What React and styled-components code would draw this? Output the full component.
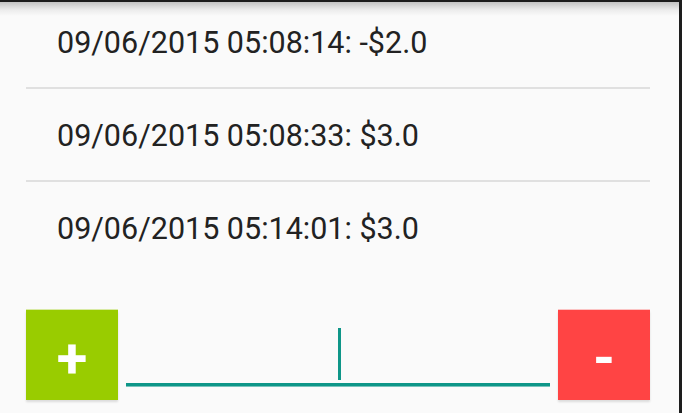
import React from "react";
import styled, { createGlobalStyle } from "styled-components";

const GlobalStyle = createGlobalStyle`
  html, body { margin: 0; padding: 0; background: #fafafa; }
  * { box-sizing: border-box; }
`;

const Screen = styled.div`
  position: relative;
  width: 682px;
  height: 413px;
  overflow: hidden;
  background: #fafafa;
  border-top: 2px solid #1d1d1d;
  border-right: 3px solid #1d1d1d;
  display: flex;
  flex-direction: column;
  font-family: Roboto, "Liberation Sans", sans-serif;
`;

const BarShadow = styled.div`
  position: absolute;
  top: 0;
  left: 0;
  right: 0;
  height: 14px;
  background: linear-gradient(to bottom, rgba(0,0,0,0.22), rgba(0,0,0,0.06) 55%, rgba(0,0,0,0));
  pointer-events: none;
`;

const List = styled.ul`
  list-style: none;
  margin: -6px 29px 0 26px;
  padding: 0;
`;

const Row = styled.li`
  padding: 29px 0 27px 31px;
  font-size: 30.5px;
  line-height: 35px;
  color: #222222;
  white-space: nowrap;
  border-bottom: 2px solid #e0e0e0;
  &:last-child { border-bottom: none; }
`;

const Controls = styled.div`
  margin-top: auto;
  display: flex;
  align-items: flex-start;
  gap: 8px;
  padding: 0 29px 13px 26px;
`;

const ActionButton = styled.button`
  width: 92px;
  height: 90px;
  border: none;
  padding: 6px 0 0;
  margin: 0;
  background: ${(p) => p.$color};
  color: #ffffff;
  font-family: Roboto, "Liberation Sans", sans-serif;
  font-weight: 700;
  font-size: 56px;
  line-height: 1;
  display: flex;
  align-items: center;
  justify-content: center;
  box-shadow: 0 -1px 0 ${(p) => p.$edge}, 0 2px 2px rgba(0, 0, 0, 0.12);
  flex: none;
`;

const Field = styled.div`
  flex: 1;
  height: 76px;
  display: flex;
  align-items: flex-end;
  justify-content: center;
  padding-bottom: 3px;
  border-bottom: 3px solid #0e9688;
  box-shadow: 0 1px 0 rgba(14, 150, 136, 0.55);
`;

const Caret = styled.span`
  display: block;
  width: 3px;
  height: 52px;
  margin-left: 3px;
  background: #0e9688;
`;

const entries = [
  "09/06/2015 05:08:14: -$2.0",
  "09/06/2015 05:08:33: $3.0",
  "09/06/2015 05:14:01: $3.0",
];

export default function App() {
  return (
    <>
      <GlobalStyle />
      <Screen>
        <List>
          {entries.map((e) => (
            <Row key={e}>{e}</Row>
          ))}
        </List>
        <Controls>
          <ActionButton $color="#99cc00" $edge="rgba(153,204,0,0.35)">+</ActionButton>
          <Field>
            <Caret />
          </Field>
          <ActionButton $color="#ff4444" $edge="rgba(255,68,68,0.3)">-</ActionButton>
        </Controls>
        <BarShadow />
      </Screen>
    </>
  );
}
